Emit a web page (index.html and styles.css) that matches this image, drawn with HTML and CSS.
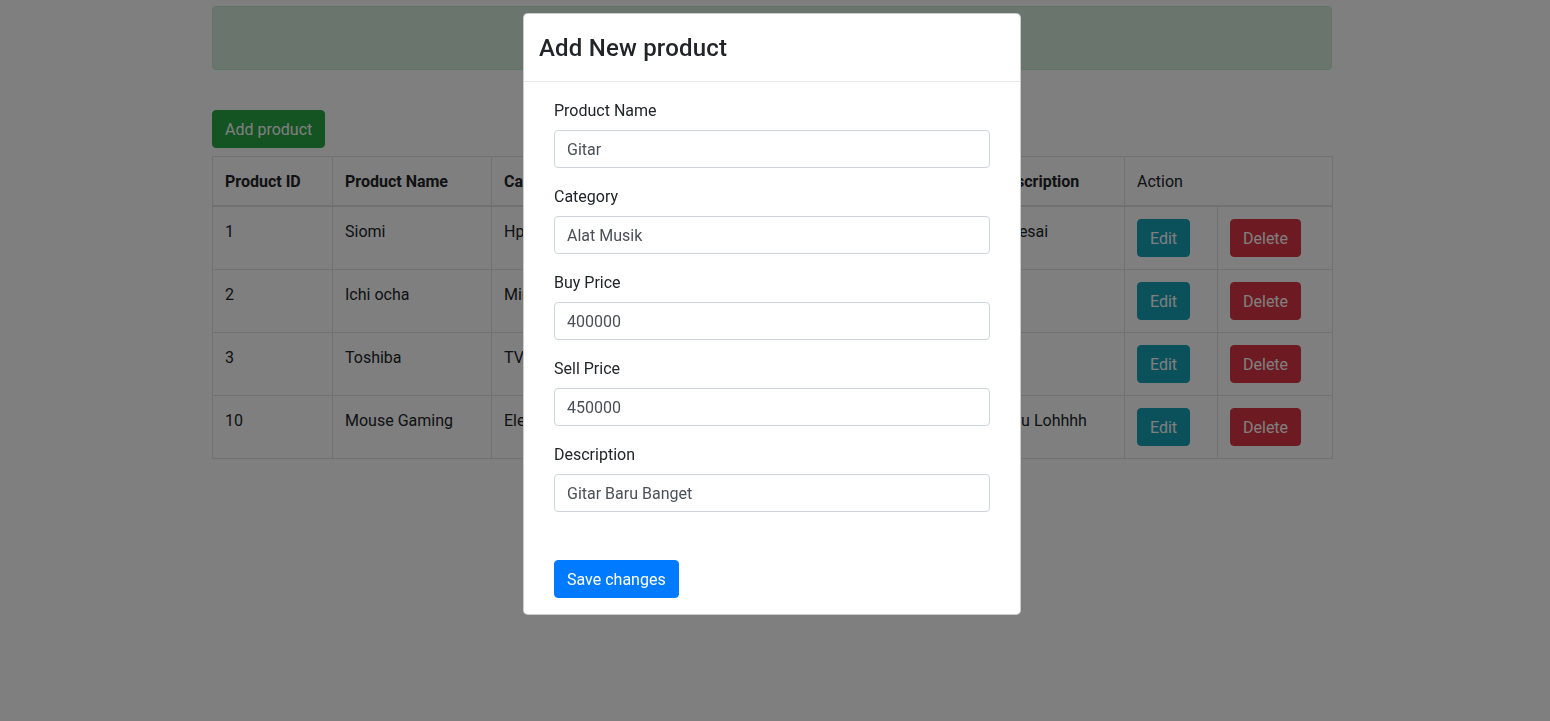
FILE: index.html
```html
<!DOCTYPE html>
<html>
<head>
<meta charset="utf-8">
<link rel="stylesheet" href="styles.css">
</head>
<body>
<div class="container">
  <div class="alert"></div>
  <button class="btn btn-success add-btn">Add product</button>
  <table class="table">
    <colgroup>
      <col style="width:120px"><col style="width:159px"><col style="width:166px"><col style="width:166px"><col style="width:161px"><col style="width:140px"><col style="width:93px"><col style="width:115px">
    </colgroup>
    <thead>
      <tr><th>Product ID</th><th>Product Name</th><th>Category</th><th>Buy Price</th><th>Sell Price</th><th>Description</th><th colspan="2" class="normal">Action</th></tr>
    </thead>
    <tbody>
      <tr><td>1</td><td>Siomi</td><td>Hp</td><td>2000</td><td>3000</td><td>Selesai</td><td><button class="btn btn-info">Edit</button></td><td><button class="btn btn-danger">Delete</button></td></tr>
      <tr><td>2</td><td>Ichi ocha</td><td>Minuman</td><td>3000</td><td>5000</td><td></td><td><button class="btn btn-info">Edit</button></td><td><button class="btn btn-danger">Delete</button></td></tr>
      <tr><td>3</td><td>Toshiba</td><td>TV</td><td>1500000</td><td>2000000</td><td></td><td><button class="btn btn-info">Edit</button></td><td><button class="btn btn-danger">Delete</button></td></tr>
      <tr><td>10</td><td>Mouse Gaming</td><td>Elektronik</td><td>150000</td><td>200000</td><td>Baru Lohhhh</td><td><button class="btn btn-info">Edit</button></td><td><button class="btn btn-danger">Delete</button></td></tr>
    </tbody>
  </table>
</div>
<div class="backdrop"></div>
<div class="modal">
  <div class="modal-header"><h4 class="modal-title">Add New product</h4></div>
  <div class="modal-body">
    <div class="form-group"><label>Product Name</label><input class="form-control" value="Gitar"></div>
    <div class="form-group"><label>Category</label><input class="form-control" value="Alat Musik"></div>
    <div class="form-group"><label>Buy Price</label><input class="form-control" value="400000"></div>
    <div class="form-group"><label>Sell Price</label><input class="form-control" value="450000"></div>
    <div class="form-group"><label>Description</label><input class="form-control" value="Gitar Baru Banget"></div>
    <div class="actions"><button class="btn btn-primary">Save changes</button></div>
  </div>
</div>
</body>
</html>
```

FILE: styles.css
```css
* { box-sizing: border-box; }
html, body { margin: 0; height: 100%; }
body {
  font-family: Roboto, "Liberation Sans", sans-serif;
  font-size: 16px;
  line-height: 1.5;
  color: #212529;
  background: #fff;
  overflow: hidden;
}
.container {
  width: 1120px;
  margin-left: 212px;
  padding-top: 6px;
}
.alert {
  height: 64px;
  background: #d4edda;
  border: 1px solid #c3e6cb;
  border-radius: 4px;
}
.btn {
  display: inline-block;
  font-family: inherit;
  font-size: 16px;
  line-height: 24px;
  padding: 7px 12px 5px;
  border: 1px solid transparent;
  border-radius: 4px;
  color: #fff;
  cursor: pointer;
}
.add-btn { margin-top: 40px; margin-bottom: 8px; display: block; }
.btn-success { background: #28a745; border-color: #28a745; }
.btn-info { background: #17a2b8; border-color: #17a2b8; }
.btn-danger { background: #dc3545; border-color: #dc3545; }
.btn-primary { background: #007bff; border-color: #007bff; }
.table {
  width: 1120px;
  border-collapse: collapse;
  table-layout: fixed;
}
.table th, .table td {
  border: 1px solid #dee2e6;
  padding: 13px 12px 11px;
  text-align: left;
  vertical-align: top;
  white-space: nowrap;
  overflow: hidden;
}
.table td .btn { margin-top: -1px; margin-bottom: 1px; }
.table thead th { border-bottom: 2px solid #dee2e6; font-weight: 700; }
.table thead th.normal { font-weight: 400; }
.backdrop {
  position: fixed;
  inset: 0;
  background: rgba(0,0,0,0.5);
}
.modal {
  position: fixed;
  top: 13px;
  left: 523px;
  width: 498px;
  background: #fff;
  border: 1px solid rgba(0,0,0,0.2);
  border-radius: 4.8px;
}
.modal-header {
  padding: 16px 15px 15px;
  border-bottom: 1px solid #e9ecef;
}
.modal-title {
  margin: 0;
  font-size: 24px;
  font-weight: 500;
  line-height: 1.5;
  letter-spacing: 0.2px;
}
.modal-body {
  padding: 16px 30px 16px 30px;
}
.form-group { margin-bottom: 16px; }
.form-group label { display: block; padding-top: 1px; margin-bottom: 7px; }
.form-control {
  display: block;
  width: 100%;
  height: 38px;
  padding: 6px 12px;
  font-family: inherit;
  font-size: 16px;
  line-height: 24px;
  color: #495057;
  background: #fff;
  border: 1px solid #ced4da;
  border-radius: 4px;
}
.actions { padding-top: 32px; }
.actions .btn { display: block; }
```
